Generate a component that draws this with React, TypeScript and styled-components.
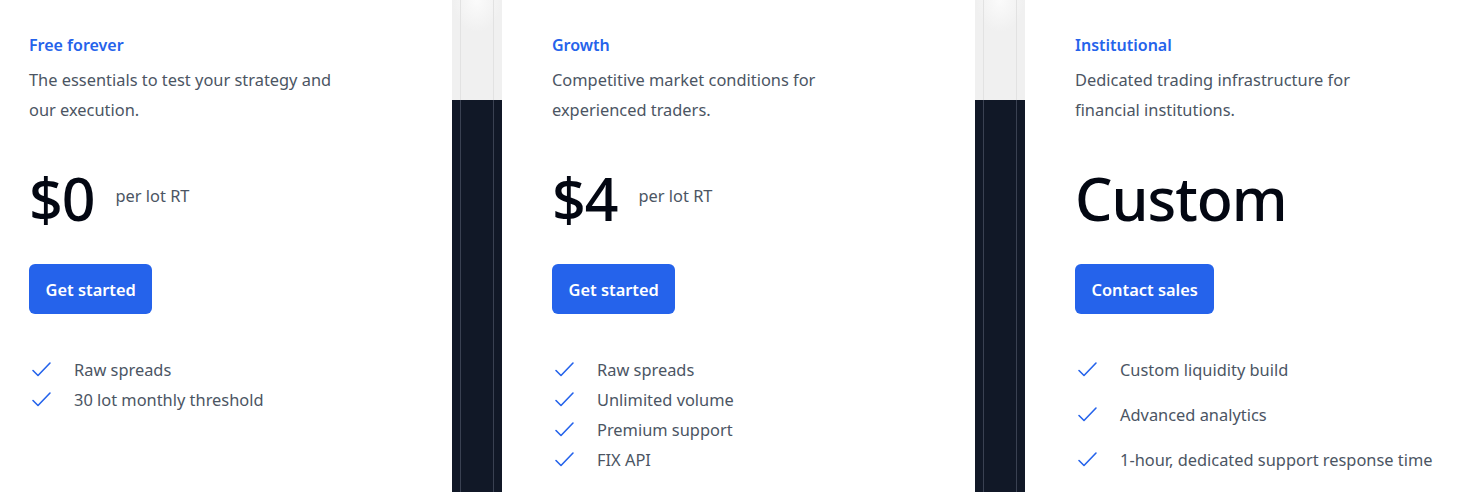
import React from 'react';
import styled, {createGlobalStyle} from 'styled-components';

const GlobalStyle = createGlobalStyle`
    html, body {
        margin: 0;
        padding: 0;
        background: #ffffff;
        overflow: hidden;
    }
    body {
        font-family: 'Noto Sans', 'Open Sans', sans-serif;
        -webkit-font-smoothing: antialiased;
    }
`;

type Plan = {
    label: string;
    description: string[];
    price: string;
    unit?: string;
    cta: string;
    features: string[];
    spacing: number;
};

const PLANS: Plan[] = [
    {
        label: 'Free forever',
        description: ['The essentials to test your strategy and', 'our execution.'],
        price: '$0',
        unit: 'per lot RT',
        cta: 'Get started',
        features: ['Raw spreads', '30 lot monthly threshold'],
        spacing: 0
    },
    {
        label: 'Growth',
        description: ['Competitive market conditions for', 'experienced traders.'],
        price: '$4',
        unit: 'per lot RT',
        cta: 'Get started',
        features: ['Raw spreads', 'Unlimited volume', 'Premium support', 'FIX API'],
        spacing: 0
    },
    {
        label: 'Institutional',
        description: ['Dedicated trading infrastructure for', 'financial institutions.'],
        price: 'Custom',
        cta: 'Contact sales',
        features: ['Custom liquidity build', 'Advanced analytics', '1-hour, dedicated support response time'],
        spacing: 15
    }
];

function CheckIcon() {
    return (
        <CheckSvg viewBox="0 0 24 24" fill="none" stroke="currentColor" strokeWidth={1.6} strokeLinecap="round" strokeLinejoin="round">
            <path d="M4 12.5l5 5L21 5" />
        </CheckSvg>
    );
}

function PlanCard({plan}: {plan: Plan}) {
    return (
        <Card>
            <Label>{plan.label}</Label>
            <Description>
                {plan.description.map((line, i) => (
                    <span key={i}>
                        {line}
                        {i < plan.description.length - 1 && <br />}
                    </span>
                ))}
            </Description>
            <PriceRow>
                <Price>{plan.price}</Price>
                {plan.unit && <Unit>{plan.unit}</Unit>}
            </PriceRow>
            <Button type="button">{plan.cta}</Button>
            <Features $gap={plan.spacing}>
                {plan.features.map((f) => (
                    <Feature key={f}>
                        <CheckIcon />
                        <span>{f}</span>
                    </Feature>
                ))}
            </Features>
        </Card>
    );
}

function Divider() {
    return (
        <Gutter>
            <GutterTop>
                <Rail $light />
            </GutterTop>
            <GutterBottom>
                <Rail />
            </GutterBottom>
        </Gutter>
    );
}

export default function App() {
    return (
        <>
            <GlobalStyle />
            <Viewport>
                <Track>
                    {PLANS.map((plan, i) => (
                        <React.Fragment key={plan.label}>
                            {i > 0 && <Divider />}
                            <PlanCard plan={plan} />
                        </React.Fragment>
                    ))}
                </Track>
            </Viewport>
        </>
    );
}

const Viewport = styled.div`
    width: 1467px;
    height: 492px;
    overflow: hidden;
`;

const Track = styled.div`
    display: flex;
    height: 100%;
    margin-left: -21px;
`;

const Card = styled.div`
    flex: 0 0 473px;
    box-sizing: border-box;
    padding: 33px 0 0 50px;
    background: #ffffff;
    display: flex;
    flex-direction: column;
    align-items: flex-start;
`;

const Label = styled.div`
    font-size: 16px;
    line-height: 24px;
    font-weight: 600;
    color: #2563eb;
`;

const Description = styled.p`
    margin: 8px 0 0;
    font-size: 16.4px;
    line-height: 30px;
    color: #4b5563;
`;

const PriceRow = styled.div`
    margin-top: 41px;
    display: flex;
    align-items: center;
    gap: 21px;
`;

const Price = styled.div`
    font-size: 59px;
    line-height: 64px;
    font-weight: 500;
    color: #030712;
    letter-spacing: -1px;
`;

const Unit = styled.div`
    font-size: 16.4px;
    line-height: 24px;
    color: #4b5563;
    margin-top: -4px;
`;

const Button = styled.button`
    margin-top: 34px;
    height: 50px;
    padding: 0 16.5px;
    border: 0;
    border-radius: 6px;
    background: #2563eb;
    color: #ffffff;
    font-family: inherit;
    font-size: 16.4px;
    font-weight: 600;
    cursor: pointer;
`;

const Features = styled.ul<{$gap: number}>`
    list-style: none;
    margin: 41px 0 0;
    padding: 0;
    display: flex;
    flex-direction: column;
    gap: ${(p) => p.$gap}px;
`;

const Feature = styled.li`
    display: flex;
    align-items: center;
    gap: 21px;
    font-size: 16.4px;
    line-height: 30px;
    color: #4b5563;
`;

const CheckSvg = styled.svg`
    width: 24px;
    height: 24px;
    color: #2563eb;
    flex: none;
`;

const Gutter = styled.div`
    flex: 0 0 50px;
    display: flex;
    flex-direction: column;
`;

const GutterTop = styled.div`
    height: 100px;
    display: flex;
    background: radial-gradient(ellipse 30px 40px at 50% 0%, #fbfbfb, #f0f0f0 80%);
`;

const GutterBottom = styled.div`
    flex: 1;
    display: flex;
    background: #111827;
`;

const Rail = styled.div<{$light?: boolean}>`
    flex: 1;
    margin: 0 8px;
    border-left: 1px solid ${(p) => (p.$light ? '#e2e2e2' : '#3a4152')};
    border-right: 1px solid ${(p) => (p.$light ? '#e2e2e2' : '#3a4152')};
`;
